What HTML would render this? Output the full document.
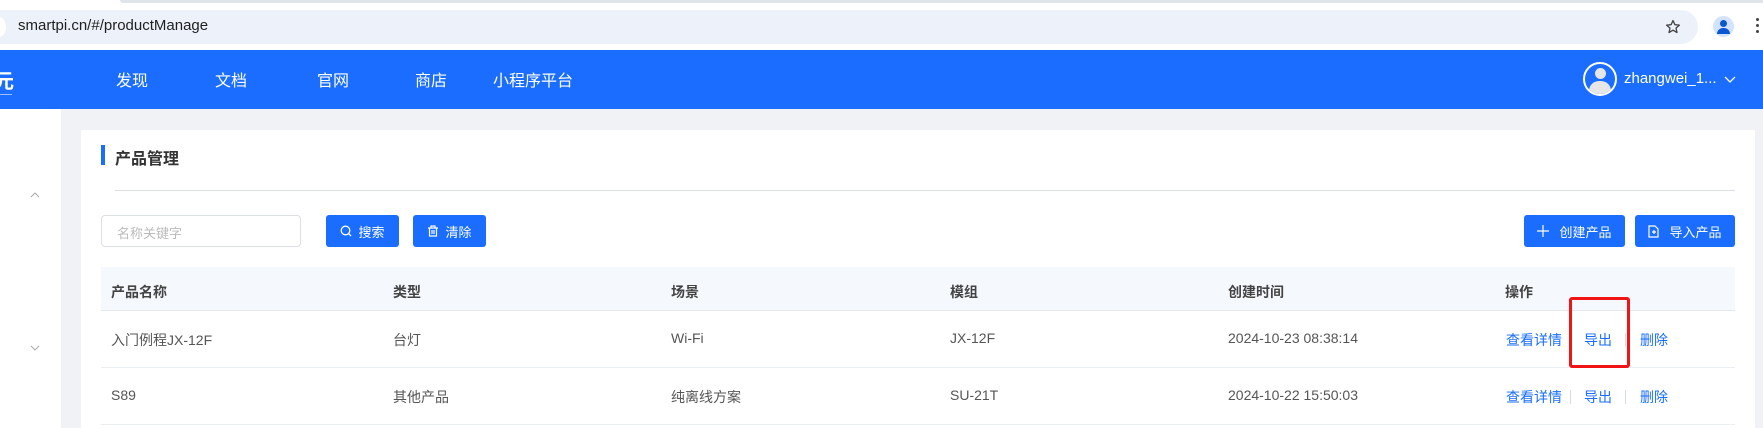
<!DOCTYPE html>
<html><head><meta charset="utf-8"><style>
*{margin:0;padding:0;box-sizing:border-box}
body{width:1763px;height:428px;overflow:hidden;background:#f0f2f6;font-family:"Liberation Sans","Noto Sans CJK SC",sans-serif;position:relative}
.a{position:absolute}
.btn{position:absolute;background:#1a6dff;color:#fff;border-radius:3px;font-size:13px;display:flex;align-items:center;justify-content:center;gap:6px;height:32px;top:215px}
.th{position:absolute;top:282px;font-size:14px;font-weight:bold;color:#444}
.td{position:absolute;font-size:14px;color:#555}
.lk{position:absolute;font-size:14px;color:#1a6dff}
.sep{position:absolute;width:1px;height:14px;background:#d8dce3}
.nav{position:absolute;top:67px;font-size:16px;color:#fff}
</style></head><body>
<div class="a" style="left:0;top:0;width:1763px;height:50px;background:#fff"></div>
<div class="a" style="left:120px;top:0;width:1643px;height:3px;background:#dfe3ea;border-radius:0 0 0 6px"></div>
<div class="a" style="left:0;top:10px;width:1698px;height:34px;background:#edf2fa;border-radius:0 17px 17px 0"></div>
<div class="a" style="left:-8px;top:17px;width:14px;height:20px;background:#fff;border-radius:50%"></div>
<div class="a" style="left:18px;top:17px;font-size:15px;color:#1f1f1f">smartpi.cn/#/productManage</div>
<svg class="a" style="left:1665px;top:19px" width="16" height="16"><path d="M8 1.5l1.9 4.2 4.5.4-3.4 3 1 4.4L8 11.2 4 13.5l1-4.4-3.4-3 4.5-.4z" fill="none" stroke="#444" stroke-width="1.3" stroke-linejoin="round"/></svg>
<div class="a" style="left:1713px;top:16px;width:21px;height:21px;border-radius:50%;background:#d3e3fd;overflow:hidden"><div class="a" style="left:7px;top:4px;width:7px;height:7px;border-radius:50%;background:#0b57d0"></div><div class="a" style="left:4px;top:12px;width:13px;height:6px;border-radius:6px 6px 0 0;background:#0b57d0"></div></div>
<div class="a" style="left:1756px;top:18px;width:3px;height:3px;border-radius:50%;background:#444;box-shadow:0 6px 0 #444,0 12px 0 #444"></div>
<div class="a" style="left:0;top:50px;width:1763px;height:59px;background:#1a6dff"></div>
<div class="a" style="left:-6px;top:65px;font-size:20px;color:#fff;font-weight:bold">元</div>
<div class="a" style="left:0;top:94px;width:12px;height:1px;background:#9cc0ff"></div>
<div class="nav" style="left:116px">发现</div>
<div class="nav" style="left:215px">文档</div>
<div class="nav" style="left:317px">官网</div>
<div class="nav" style="left:415px">商店</div>
<div class="nav" style="left:493px">小程序平台</div>
<div class="a" style="left:1583px;top:62px;width:34px;height:34px;border:2px solid #fff;border-radius:50%;overflow:hidden"><div class="a" style="left:10px;top:4px;width:11px;height:11px;border-radius:50%;background:#e6e6e6"></div><div class="a" style="left:4px;top:17px;width:22px;height:14px;border-radius:10px 10px 0 0;background:#e6e6e6"></div></div>
<div class="a" style="left:1624px;top:70px;font-size:15px;color:#fff">zhangwei_1...</div>
<svg class="a" style="left:1724px;top:76px" width="12" height="8"><path d="M1 1l5 5 5-5" stroke="#fff" fill="none" stroke-width="1.3"/></svg>
<div class="a" style="left:0;top:109px;width:61px;height:319px;background:#fff"></div>
<svg class="a" style="left:30px;top:192px" width="10" height="6"><path d="M1 5l4-4 4 4" stroke="#aaa" fill="none"/></svg>
<svg class="a" style="left:30px;top:345px" width="10" height="6"><path d="M1 1l4 4 4-4" stroke="#aaa" fill="none"/></svg>
<div class="a" style="left:81px;top:130px;width:1674px;height:298px;background:#fff"></div>
<div class="a" style="left:101px;top:145px;width:4px;height:20px;background:#1a6dff"></div>
<div class="a" style="left:115px;top:145px;font-size:16px;font-weight:bold;color:#333">产品管理</div>
<div class="a" style="left:115px;top:190px;width:1620px;height:1px;background:#dcdfe6"></div>
<div class="a" style="left:101px;top:215px;width:200px;height:32px;border:1px solid #dcdfe6;border-radius:4px;font-size:13px;color:#bbb;padding:7px 15px">名称关键字</div>
<div class="btn" style="left:326px;width:73px"><svg width="12" height="12"><circle cx="5.5" cy="5.5" r="4.3" stroke="#fff" fill="none" stroke-width="1.3"/><path d="M8.5 8.5l2.5 2.5" stroke="#fff" stroke-width="1.3"/></svg>搜索</div>
<div class="btn" style="left:413px;width:73px"><svg width="12" height="12"><path d="M1 3h10M4 3V1h4v2M2.5 3v8h7V3M5 5v4M7 5v4" stroke="#fff" fill="none" stroke-width="1.2"/></svg>清除</div>
<div class="btn" style="left:1524px;width:101px;gap:10px"><svg width="12" height="12"><path d="M6 0v12M0 6h12" stroke="#fff" stroke-width="1.2"/></svg>创建产品</div>
<div class="btn" style="left:1635px;width:100px;gap:10px"><svg width="11" height="13"><path d="M1 1h6l3 3v8H1z M4 7h4M6 5v4" stroke="#fff" fill="none" stroke-width="1.2"/></svg>导入产品</div>
<div class="a" style="left:101px;top:267px;width:1634px;height:44px;background:#f5f8fd;border-bottom:1px solid #e4e7ed"></div>
<div class="th" style="left:111px">产品名称</div><div class="th" style="left:393px">类型</div><div class="th" style="left:671px">场景</div><div class="th" style="left:950px">模组</div><div class="th" style="left:1228px">创建时间</div><div class="th" style="left:1505px">操作</div>
<div class="a" style="left:101px;top:367px;width:1634px;height:1px;background:#ebeef5"></div>
<div class="a" style="left:101px;top:424px;width:1634px;height:1px;background:#ebeef5"></div>
<div class="td" style="left:111px;top:330px">入门例程JX-12F</div><div class="td" style="left:393px;top:330px">台灯</div><div class="td" style="left:671px;top:330px">Wi-Fi</div><div class="td" style="left:950px;top:330px">JX-12F</div><div class="td" style="left:1228px;top:330px">2024-10-23 08:38:14</div>
<div class="td" style="left:111px;top:387px">S89</div><div class="td" style="left:393px;top:387px">其他产品</div><div class="td" style="left:671px;top:387px">纯离线方案</div><div class="td" style="left:950px;top:387px">SU-21T</div><div class="td" style="left:1228px;top:387px">2024-10-22 15:50:03</div>
<div class="lk" style="left:1506px;top:330px">查看详情</div><div class="lk" style="left:1584px;top:330px">导出</div><div class="sep" style="left:1625px;top:333px"></div><div class="lk" style="left:1640px;top:330px">删除</div>
<div class="lk" style="left:1506px;top:387px">查看详情</div><div class="sep" style="left:1570px;top:390px"></div><div class="lk" style="left:1584px;top:387px">导出</div><div class="sep" style="left:1625px;top:390px"></div><div class="lk" style="left:1640px;top:387px">删除</div>
<div class="a" style="left:1569px;top:297px;width:61px;height:71px;border:3px solid #f01414;border-radius:3px"></div>
</body></html>
